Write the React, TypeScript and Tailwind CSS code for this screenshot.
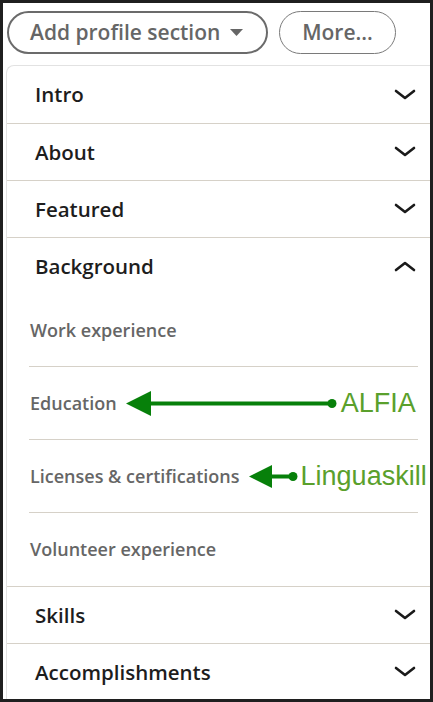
const font = { fontFamily: '"Open Sans", "Noto Sans", sans-serif' };
const arial = { fontFamily: '"Liberation Sans", Arial, sans-serif' };

function Chevron({ up = false }: { up?: boolean }) {
    return (
        <svg width="22" height="12" viewBox="0 0 22 12" className="shrink-0">
            <path
                d={up ? "M2 10 L11 3 L20 10" : "M2 2 L11 9 L20 2"}
                fill="none"
                stroke="#1a1a1a"
                strokeWidth="2.6"
                strokeLinecap="round"
                strokeLinejoin="round"
            />
        </svg>
    );
}

function Section({ title, open = false, tall = false }: { title: string; open?: boolean; tall?: boolean }) {
    return (
        <div className={`flex items-center justify-between pl-[28px] pr-[14px] ${tall ? "h-[57px]" : "h-[56px]"}`}>
            <span className="text-[20.5px] font-semibold text-[#1d1d1d]" style={font}>
                {title}
            </span>
            <Chevron up={open} />
        </div>
    );
}

// green annotation arrow, tip on the left, dot on the right
function Arrow({ line, head = 24 }: { line: number; head?: number }) {
    const h = head;
    return (
        <svg width={line + head + 10} height={h + 2} viewBox={`0 0 ${line + head + 10} ${h + 2}`} className="shrink-0">
            <polygon points={`0,${h / 2 + 1} ${head},1 ${head},${h + 1}`} fill="#07800a" />
            <rect x={head - 2} y={h / 2 - 1} width={line + 4} height="4" fill="#07800a" />
            <circle cx={line + head + 5} cy={h / 2 + 1} r="4.5" fill="#07800a" />
        </svg>
    );
}

function SubItem({ label, children, last = false }: { label: string; children?: React.ReactNode; last?: boolean }) {
    return (
        <div className={`flex h-[73px] items-center pl-[1px] ${last ? "" : "border-b border-[#d6d1c8]"}`}>
            <span className="shrink-0 whitespace-nowrap text-[18px] font-semibold text-[#666666]" style={font}>
                {label}
            </span>
            {children}
        </div>
    );
}

export default function App() {
    return (
        <div className="h-[702px] w-[433px] overflow-hidden border-[3px] border-[#1f1f1f] bg-white">
            <div className="flex gap-[11px] pl-[4px] pt-[8px]">
                <button
                    className="flex h-[43px] w-[261px] items-center gap-[10px] rounded-full border-[2px] border-[#6b6b6b] pl-[21px] text-[21px] font-semibold text-[#666666]"
                    style={font}
                >
                    Add profile section
                    <svg width="13" height="8" viewBox="0 0 13 8">
                        <polygon points="0,0 13,0 6.5,7" fill="#666666" />
                    </svg>
                </button>
                <button
                    className="flex h-[43px] w-[117px] items-center justify-center rounded-full border border-[#7a7a7a] text-[21px] font-semibold text-[#666666]"
                    style={font}
                >
                    More...
                </button>
            </div>

            <div className="ml-[3px] mt-[11px] rounded-tl-[8px] border-l border-t border-[#e2e2e2] bg-white">
                <Section title="Intro" tall />
                <div className="border-t border-[#d6d1c8]" />
                <Section title="About" />
                <div className="border-t border-[#d6d1c8]" />
                <Section title="Featured" />
                <div className="border-t border-[#d6d1c8]" />
                <Section title="Background" open />
                <div className="pl-[22px] pr-[12px]">
                    <SubItem label="Work experience" />
                    <SubItem label="Education">
                        <span className="ml-[9px] flex shrink-0 items-center">
                            <Arrow line={176} head={25} />
                        </span>
                        <span className="ml-[4px] shrink-0 whitespace-nowrap text-[27px] text-[#5aa02c]" style={arial}>
                            ALFIA
                        </span>
                    </SubItem>
                    <SubItem label="Licenses & certifications">
                        <span className="ml-[9px] flex shrink-0 items-center">
                            <Arrow line={16} head={23} />
                        </span>
                        <span className="ml-[3px] shrink-0 whitespace-nowrap text-[27px] text-[#5aa02c]" style={arial}>
                            Linguaskill
                        </span>
                    </SubItem>
                    <SubItem label="Volunteer experience" last />
                </div>
                <div className="border-t border-[#d6d1c8]" />
                <Section title="Skills" />
                <div className="border-t border-[#d6d1c8]" />
                <Section title="Accomplishments" />
            </div>
        </div>
    );
}
